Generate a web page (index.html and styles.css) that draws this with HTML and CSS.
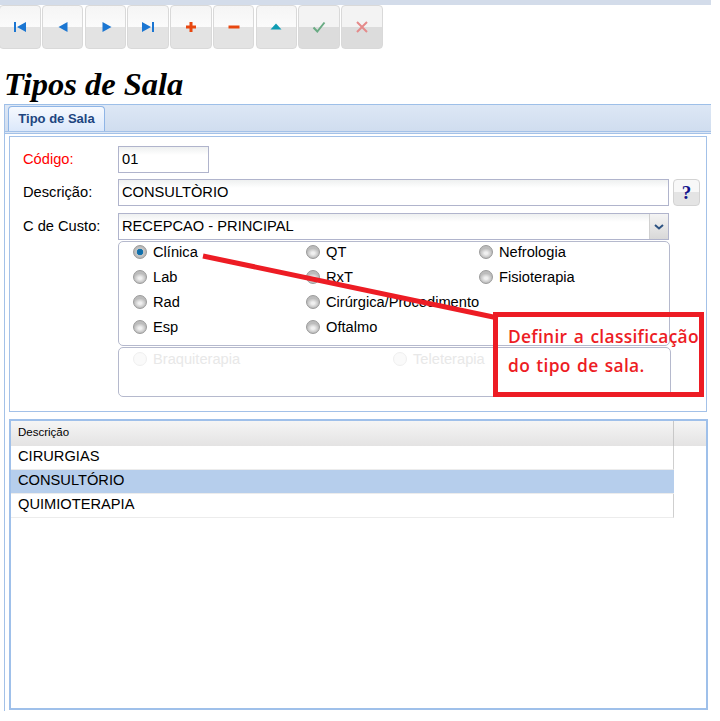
FILE: index.html
```html
<!DOCTYPE html>
<html lang="pt">
<head>
<meta charset="utf-8">
<title>Tipos de Sala</title>
<link rel="stylesheet" href="styles.css">
</head>
<body>
<div class="page">
  <div class="topbar"></div>
  <div class="toolbar">
    <button class="tool"><svg viewBox="0 0 14 12" class="ico"><path d="M1 1h2v10H1zM13 1v10L4 6z" fill="#1b76d2"/></svg></button>
    <button class="tool"><svg viewBox="0 0 14 12" class="ico"><path d="M11.500 1v10L2.500 6z" fill="#1b76d2"/></svg></button>
    <button class="tool"><svg viewBox="0 0 14 12" class="ico"><path d="M4.500 1v10l9-5z" fill="#1b76d2"/></svg></button>
    <button class="tool"><svg viewBox="0 0 14 12" class="ico"><path d="M13 1h-2v10h2zM1 1v10l9-5z" fill="#1b76d2"/></svg></button>
    <button class="tool"><svg viewBox="0 0 14 12" class="ico"><path d="M5.500 1h3v3.500H12v3H8.500V11h-3V7.500H2v-3h3.500z" fill="#e8470f"/></svg></button>
    <button class="tool"><svg viewBox="0 0 14 12" class="ico"><path d="M1.500 4.500h11v3h-11z" fill="#e8470f"/></svg></button>
    <button class="tool"><svg viewBox="0 0 14 12" class="ico"><path d="M7 2.500l5.500 6h-11z" fill="#0f9cb3"/></svg></button>
    <button class="tool off"><svg viewBox="0 0 14 12" class="ico"><path d="M1.500 6.500l3.800 4L12.500 1.500" fill="none" stroke="#69ab83" stroke-width="2"/></svg></button>
    <button class="tool off"><svg viewBox="0 0 14 12" class="ico"><path d="M2 1l10 10M12 1L2 11" fill="none" stroke="#e58a8a" stroke-width="2"/></svg></button>
  </div>
  <h1 class="title">Tipos de Sala</h1>
  <div class="tabs">
    <div class="tabstrip"><div class="tab">Tipo de Sala</div></div>
    <div class="panel">
      <div class="fields">
        <div class="field">
          <label class="lbl req">Código:</label>
          <div class="input short">01</div>
        </div>
        <div class="field">
          <label class="lbl">Descrição:</label>
          <div class="input wide">CONSULTÒRIO</div>
          <button class="help">?</button>
        </div>
        <div class="field">
          <label class="lbl">C de Custo:</label>
          <div class="input wide combo">RECEPCAO - PRINCIPAL
            <span class="arrow"><svg viewBox="0 0 10 6" class="chev"><path d="M1 1l4 3.500L9 1" fill="none" stroke="#2c5282" stroke-width="2"/></svg></span>
          </div>
        </div>
      </div>
      <div class="group main">
        <div class="opt"><span class="radio on"></span>Clínica</div>
        <div class="opt"><span class="radio"></span>QT</div>
        <div class="opt"><span class="radio"></span>Nefrologia</div>
        <div class="opt"><span class="radio"></span>Lab</div>
        <div class="opt"><span class="radio"></span>RxT</div>
        <div class="opt"><span class="radio"></span>Fisioterapia</div>
        <div class="opt"><span class="radio"></span>Rad</div>
        <div class="opt"><span class="radio"></span>Cirúrgica/Procedimento</div>
        <div class="opt"></div>
        <div class="opt"><span class="radio"></span>Esp</div>
        <div class="opt"><span class="radio"></span>Oftalmo</div>
      </div>
      <div class="group second">
        <div class="opt dis"><span class="radio"></span>Braquiterapia</div>
        <div class="opt dis"><span class="radio"></span>Teleterapia</div>
      </div>
    </div>
    <div class="grid">
      <div class="ghead"><div class="gcol">Descrição</div><div class="gend"></div></div>
      <div class="grow">CIRURGIAS</div>
      <div class="grow sel">CONSULTÓRIO</div>
      <div class="grow last">QUIMIOTERAPIA</div>
    </div>
  </div>
  <svg class="callout-line" viewBox="0 0 300 70"><path d="M2 4L297 66" stroke="#ed1c24" stroke-width="5" fill="none"/></svg>
  <div class="callout">Definir a classificação<br>do tipo de sala.</div>
</div>
</body>
</html>
```
FILE: styles.css
```css
* { box-sizing: border-box; }
html, body { margin: 0; padding: 0; background: #fff; }
body { font-family: "Liberation Sans", Arial, sans-serif; font-size: 14.670px; color: #000; }
.page { position: relative; width: 720px; height: 721px; overflow: hidden; }
.topbar { height: 5px; width: 711px; background: #d3dcea; }
.toolbar { display: flex; gap: 1.250px; height: 44px; margin-left: -1px; }
.tool { width: 41.500px; height: 44px; padding: 0; border: 1px solid #d9d9d9; border-radius: 4px; background: linear-gradient(#f5f5f5 0, #fbfbfb 50%, #e3e3e3 50%, #e3e3e3 100%); display: flex; align-items: center; justify-content: center; }
.tool.off { background: linear-gradient(#f3f3f3 0, #f3f3f3 50%, #dcdcdc 50%, #dcdcdc 100%); }
.ico { width: 14px; height: 12px; display: block; }
.title { margin: 0 0 0 4px; height: 55px; padding-top: 17px; font: italic bold 32.500px/37px "Liberation Serif", "Times New Roman", serif; }
.tabs { margin-left: 4px; width: 707px; height: 607px; border-left: 1px solid #a3c1e8; }
.tabstrip { height: 30px; border-top: 1px solid #9dbfe8; border-bottom: 3px double #a3c1e8; background: linear-gradient(#dde7f5, #d0ddef); padding: 1px 0 0 3px; }
.tab { width: 97px; height: 25px; border: 1px solid #8fb5e6; border-bottom: 0; border-radius: 4px 4px 0 0; background: linear-gradient(#f6f9fe, #dbe8fb); color: #20457f; font-weight: bold; font-size: 13px; line-height: 23px; text-align: center; }
.panel { margin: 2px 0 0 4px; width: 698px; height: 276px; border: 1px solid #a3c1e8; padding: 9px 0 0 13px; }
.fields { display: grid; grid-template-rows: 33px 34px 28px; }
.field { display: flex; align-items: flex-start; }
.lbl { width: 95px; line-height: 26px; }
.req { color: #f00; }
.input { height: 27px; border: 1px solid #b0b4cc; background: linear-gradient(#eef0f0, #fff 8px); line-height: 25px; padding-left: 3px; }
.short { width: 91px; }
.wide { width: 551px; }
.combo { position: relative; }
.arrow { position: absolute; right: 0; top: 0; bottom: 0; width: 19px; background: linear-gradient(#f4f4f4, #d8d8d8); border-left: 1px solid #d0d0d0; display: flex; align-items: center; justify-content: center; }
.chev { width: 10px; height: 6px; display: block; }
.help { width: 27px; height: 27px; margin-left: 4px; padding: 0; border: 1px solid #d3d3d3; border-radius: 4px; background: linear-gradient(#f8f8f8 50%, #e4e4e4 50%); color: #14148c; font: bold 19px/25px "Liberation Serif", serif; }
.group { width: 552px; margin-left: 95px; border: 1px solid #b5b9cd; border-radius: 5px; display: grid; grid-template-columns: 173px 173px 1fr; }
.main { height: 105px; grid-auto-rows: 25px; padding: 0 0 0 14px; }
.main .opt { height: 20px; }
.second { height: 50px; margin-top: 1px; width: 553px; grid-template-columns: 260px 1fr; padding: 0 0 0 14px; align-content: start; }
.opt { display: flex; align-items: center; height: 22px; color: #000; }
.dis { color: #e8e8e8; }
.radio { width: 14px; height: 14px; margin-right: 6px; border-radius: 50%; border: 1px solid #9a9a9a; background: radial-gradient(closest-side at 50% 60%, #f0f0f0 25%, #bcbcbc 100%); flex: none; }
.radio.on { background: radial-gradient(closest-side at 50% 50%, #0f6aa8 0, #1273ae 48%, #c8c8c8 60%, #b4b4b4 100%); }
.dis .radio { border-color: #efefef; background: #fafafa; }
.grid { margin: 7px 0 0 4px; width: 699px; height: 291px; border: 2px solid #9fc0ea; position: relative; }
.ghead { display: flex; height: 25px; background: linear-gradient(#f5f5f5, #e4e3e3); }
.gcol { width: 663px; font-size: 11.500px; line-height: 22px; padding-left: 7px; border-right: 1px solid #c8c8c8; }
.gend { flex: 1; }
.grow { width: 663px; height: 24px; line-height: 20px; padding-left: 7px; border-right: 1px solid #cfcfcf; border-bottom: 1px solid #ececec; }
.grow.sel { background: #b6ceec; border-right: 0; }
.callout-line { position: absolute; left: 201px; top: 252px; width: 300px; height: 70px; }
.callout { position: absolute; left: 493px; top: 312px; width: 211px; height: 85px; border: 5px solid #ed1c24; padding: 5px 0 0 10px; color: #ed1c24; font: 600 17.400px/29px "Open Sans", sans-serif; letter-spacing: .3px; word-spacing: 1.500px; white-space: nowrap; }
```
